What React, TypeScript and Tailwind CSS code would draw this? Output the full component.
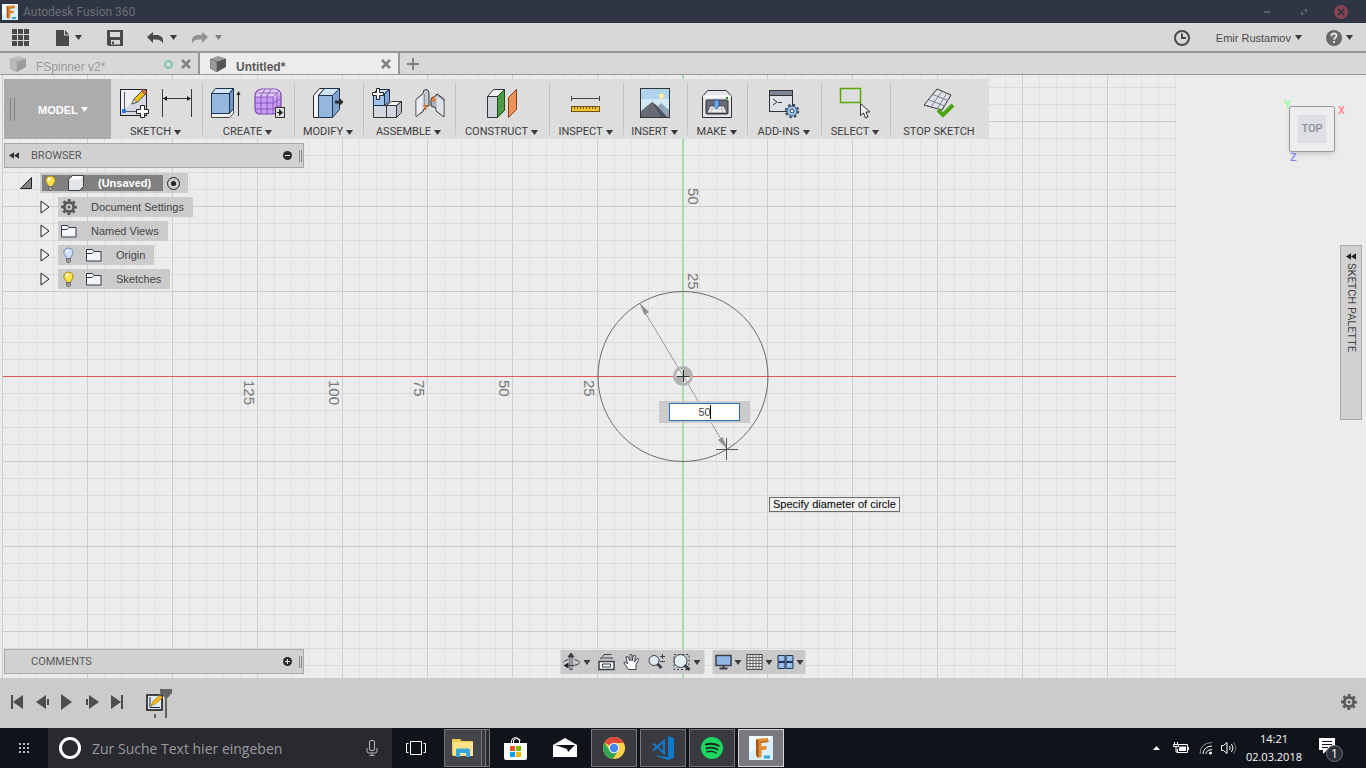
import type { ReactNode } from 'react'

const MAJOR = 85
const MINOR = 17

const Caret = ({ className = 'text-[#3a3a3a]' }: { className?: string }) => (
  <svg className={`w-[7px] h-[5px] shrink-0 ${className}`} viewBox="0 0 7 5" fill="currentColor">
    <path d="M0 0h7L3.500 5z" />
  </svg>
)

/* ---------- Title bar, quick access, tabs ---------- */

const FusionLogo = ({ className }: { className: string }) => (
  <svg className={className} viewBox="0 0 24 24">
    <rect width="24" height="24" fill="#d9f0fa" />
    <path d="M0 0h24L0 18z" fill="#eef9fd" />
    <path d="M7 3l12-1 .5 4-7 .8v3.500l5-.3v3.600l-5 .6V21l-4 1z" fill="#e58a2f" />
    <path d="M7 3l2.500 1.500L9.500 20l-1 2-1.500-3z" fill="#a9551a" />
    <path d="M10 6l9-1.200.5 1.200-7 .9z" fill="#b5651f" />
    <path d="M15 19.500h6v3h-6z" fill="#2fa6dc" />
  </svg>
)

const TitleBar = () => (
  <header className="flex items-center h-[23px] pl-0.5 pr-[18px] bg-[#2f3542]">
    <FusionLogo className="w-4 h-4" />
    <h1 className="ml-[5px] text-[12px] leading-4 text-[#6b7078] font-['Roboto',sans-serif]">Autodesk Fusion 360</h1>
    <div className="ml-auto flex items-center h-full">
      <button aria-label="Minimize" className="w-[6px] h-0.5 bg-[#596070]" />
      <button aria-label="Restore" className="ml-[31px]">
        <svg className="w-[6px] h-[6px]" viewBox="0 0 6 6" fill="#596070">
          <path d="M2 0h4v4zM0 2v4h4z" />
        </svg>
      </button>
      <button aria-label="Close" className="ml-[27px]">
        <svg className="w-[14px] h-[14px]" viewBox="0 0 14 14">
          <circle cx="7" cy="7" r="7" fill="#8b4250" />
          <path d="M4 4l6 6M10 4l-6 6" stroke="#2f3542" strokeWidth="1.800" />
        </svg>
      </button>
    </div>
  </header>
)

const QuickAccess = () => (
  <div className="flex items-center h-[30px] pl-3 pr-[13px] pt-px bg-[#d8d8d8] border-b-2 border-[#979797] text-[#4a4a4a]">
    <button aria-label="Data panel">
      <svg className="w-[17px] h-[17px]" viewBox="0 0 17 17" fill="currentColor">
        <path d="M0 0h5v5H0zM6 0h5v5H6zM12 0h5v5h-5zM0 6h5v5H0zM6 6h5v5H6zM12 6h5v5h-5zM0 12h5v5H0zM6 12h5v5H6zM12 12h5v5h-5z" />
      </svg>
    </button>
    <button aria-label="File" className="ml-[27px] flex items-center gap-1.5">
      <svg className="w-[13px] h-4" viewBox="0 0 13 16" fill="currentColor">
        <path d="M0 0h8v5.500h5V16H0zM9 0l4 4.500H9z" />
      </svg>
      <Caret />
    </button>
    <button aria-label="Save" className="ml-[25px]">
      <svg className="w-4 h-4" viewBox="0 0 16 16" fill="currentColor">
        <path fillRule="evenodd" d="M0 0h16v16H1.500L0 14.500zM3 2v5h10V2zM4 10v4.500h9V10zM5 11.500h2V14H5z" />
      </svg>
    </button>
    <button aria-label="Undo" className="ml-6 flex items-center gap-[7px]">
      <svg className="w-4 h-3" viewBox="0 0 16 12" fill="currentColor">
        <path d="M0 5l6-5v3h3c4 0 7 2 7 5v4c-1-3-3-4.500-7-4.500H6V11z" />
      </svg>
      <Caret />
    </button>
    <button aria-label="Redo" className="ml-[15px] flex items-center gap-[7px] text-[#929292]">
      <svg className="w-4 h-3" viewBox="0 0 16 12" fill="currentColor">
        <path d="M16 5l-6-5v3H7C3 3 0 5 0 8v4c1-3 3-4.500 7-4.500h3V11z" />
      </svg>
      <Caret className="text-[#808080]" />
    </button>

    <button aria-label="Job status" className="ml-auto">
      <svg className="w-4 h-4" viewBox="0 0 16 16" fill="none" stroke="currentColor" strokeWidth="2">
        <circle cx="8" cy="8" r="7" />
        <path d="M8 3.500V8h4" />
      </svg>
    </button>
    <button className="ml-[26px] flex items-center gap-1 text-[11px] leading-4">
      Emir Rustamov
      <Caret />
    </button>
    <button aria-label="Help" className="ml-6 flex items-center gap-1">
      <svg className="w-4 h-4" viewBox="0 0 16 16">
        <circle cx="8" cy="8" r="8" fill="#696969" />
        <path d="M5.500 6.200c0-3.400 5-3.400 5-.5C10.500 7.500 8 7.600 8 9.800M8 11v2" fill="none" stroke="#e4e4e4" strokeWidth="2" />
      </svg>
      <Caret />
    </button>
  </div>
)

const TabCube = ({ light, dark }: { light: string; dark: string }) => (
  <svg className="w-4 h-4 shrink-0" viewBox="0 0 16 16">
    <path d="M0 3l8-3 8 2.500-9 3z" fill={light} />
    <path d="M0 3l7 2.500V16l-7-4z" fill={light} stroke={dark} strokeWidth=".6" />
    <path d="M7 5.500l9-3V11l-9 5z" fill={dark} />
  </svg>
)

const CloseMark = () => (
  <svg className="w-[10px] h-[10px]" viewBox="0 0 10 10" stroke="#818181" strokeWidth="2.500">
    <path d="M1 1l8 8M9 1L1 9" />
  </svg>
)

const Tabs = () => (
  <div className="flex h-[22px] bg-[#d8d8d8] border-b border-[#979797] text-[12px] leading-4">
    <div className="flex items-center w-[200px] pl-[10px] pr-[7px] pt-px border-r-2 border-[#979797]">
      <TabCube light="#bcbcbc" dark="#9c9c9c" />
      <span className="ml-[10px] pt-1.5 text-[#9a9a9a]">FSpinner v2*</span>
      <span className="ml-auto w-[9px] h-[9px] rounded-full border-2 border-[#7fc5b5]" />
      <button aria-label="Close FSpinner v2" className="ml-2">
        <CloseMark />
      </button>
    </div>
    <div className="flex items-center w-[200px] pl-[10px] pr-[7px] pt-px bg-[#ececec] border-r-2 border-[#979797]">
      <TabCube light="#9b9b9b" dark="#565656" />
      <span className="ml-[10px] pt-1.5 font-bold text-[#5a5a5a]">Untitled*</span>
      <button aria-label="Close Untitled" className="ml-auto">
        <CloseMark />
      </button>
    </div>
    <button aria-label="New tab" className="ml-[7px]">
      <svg className="w-3 h-3" viewBox="0 0 12 12" stroke="#808080" strokeWidth="2">
        <path d="M6 0v12M0 6h12" />
      </svg>
    </button>
  </div>
)

/* ---------- Toolbar ---------- */

const Tool = ({ children }: { children: ReactNode }) => (
  <svg className="w-8 h-8" viewBox="0 0 32 32" fill="none">
    {children}
  </svg>
)

const SketchIcon = () => (
  <Tool>
    <rect x="2.500" y="2.500" width="26" height="26" fill="#d5d9e4" stroke="#222" />
    <path d="M3 3h25L3 25z" fill="#eef0f5" />
    <path d="M6.500 5v19.500H22" stroke="#555" />
    <rect x="4" y="22" width="4" height="4" fill="#2e7be0" />
    <path d="M14 17l2-5 9-9 3.500 3-9 9z" fill="#f5c21b" stroke="#222" strokeWidth=".8" />
    <path d="M23.500 4.500l2-2.500 3.500 3-2 2.500z" fill="#c4744f" stroke="#7a3b23" strokeWidth=".6" />
    <path d="M14 17l2-5 2.500 3z" fill="#fff" stroke="#222" strokeWidth=".5" />
    <path d="M22.500 18.500h4v4h4v4h-4v4h-4v-4h-4v-4h4z" fill="#fff" stroke="#222" />
  </Tool>
)

const DimensionIcon = () => (
  <Tool>
    <path d="M1.500 2v28M30.500 2v28M2 11.500h28" stroke="#3a3a3a" />
    <path d="M2 11.500l4-2.500v5zM30 11.500l-4-2.500v5z" fill="#222" />
  </Tool>
)

const ExtrudeIcon = () => (
  <Tool>
    <path d="M1.500 26v4.500h18l4-4v-5" fill="#f1f1f1" stroke="#444" />
    <path d="M1.500 6.500h18v20h-18z" fill="#93b7dd" stroke="#1d3150" />
    <path d="M1.500 6.500l4-5h18l-4 5z" fill="#d4e6f5" stroke="#1d3150" />
    <path d="M19.500 6.500l4-5v20l-4 5z" fill="#6f97c5" stroke="#1d3150" />
    <path d="M28.500 29V6" stroke="#333" />
    <path d="M28.500 4l2 4h-4z" fill="#222" />
  </Tool>
)

const FormIcon = () => (
  <Tool>
    <path d="M2 11Q1 3 9 2h12q7 0 7 7v11q-2 7-9 7H7q-5 0-5-6z" fill="#c79cf2" stroke="#7b4ab0" strokeWidth="1.200" />
    <path d="M3 10Q4 3 9 2.500h12q5 0 6 4l-4 4z" fill="#e3ccfb" />
    <path d="M2 10h18M2 16h18M2 22h18M8 8v19M14 8v19M20 10v17M8 9l4-7M14 9l4-7M20 10l6-6M20 16l8-4M20 22l8-4M5 6h19M24 6v18" stroke="#7b4ab0" strokeWidth=".8" />
    <rect x="22.500" y="20.500" width="9" height="10" fill="#ddd" stroke="#333" />
    <path d="M24 25h2v-3l4 3.500-4 3.500v-3h-2z" fill="#222" />
  </Tool>
)

const PressPullIcon = () => (
  <Tool>
    <path d="M1.500 8.500l6-7h5l-6 7v22h-5z" fill="#f2f3f6" stroke="#222" />
    <path d="M6.500 8.500h14v22h-14z" fill="#93b7dd" stroke="#1d3150" />
    <path d="M6.500 8.500l6-7h15l-7 7z" fill="#d4e6f5" stroke="#1d3150" />
    <path d="M20.500 8.500l7-7v21l-7 8z" fill="#7fa4cf" stroke="#1d3150" />
    <path d="M23 13.500h4v-3l4.500 4.500-4.500 4.500v-3h-4z" fill="#2a2a2a" />
  </Tool>
)

const ComponentIcon = () => (
  <Tool>
    <path d="M2.500 18.500h13v12h-13zM15.500 18.500h10v12h-10z" fill="#d3d7e0" stroke="#333" />
    <path d="M15.500 18.500l5-4h10l-5 4z" fill="#f1f2f5" stroke="#333" />
    <path d="M25.500 18.500l5-4v11l-5 5z" fill="#b8bdc9" stroke="#333" />
    <path d="M2.500 6.500h11v12h-11z" fill="#9fc0e8" stroke="#1d3150" />
    <path d="M2.500 6.500l4-4h12l-5 4z" fill="#cfe0f4" stroke="#1d3150" />
    <path d="M13.500 6.500l5-4v12l-5 4z" fill="#7fa4d6" stroke="#1d3150" />
    <path d="M5.500 1.500h3v4h4v3h-4v4h-3v-4h-4v-3h4z" fill="#fff" stroke="#222" />
  </Tool>
)

const JointIcon = () => (
  <Tool>
    <path d="M2 12.500l7-6q0-4 3-4t3 4v12l-4 2-2 4-7 5z" fill="#c3c9d2" stroke="#333" />
    <path d="M2.500 13l6-5v15l-6 6z" fill="#eceef2" />
    <path d="M10.500 7v12" stroke="#8e95a1" />
    <path d="M17 13q0-3 3-3l3-3 7 5v18l-8-6v-3l-5-2z" fill="#aab1bd" stroke="#333" />
    <path d="M22.500 9l7 5v15l-7-5.500z" fill="#dfe2e8" />
    <path d="M11.500 23v-5M19.500 15V9" stroke="#f07018" strokeWidth="1.600" />
    <path d="M9 18.500h5M17 13h5" stroke="#f07018" />
  </Tool>
)

const ConstructIcon = () => (
  <Tool>
    <path d="M1.500 9.500h10v21h-10z" fill="#cfd3dd" stroke="#333" />
    <path d="M1.500 9.500l6-7h11l-7 7z" fill="#f2f3f6" stroke="#333" />
    <path d="M11.500 9.500l7-7v21l-7 7z" fill="#4f9a45" stroke="#1f4a1b" />
    <path d="M22.500 10.500l8-8v20l-8 8z" fill="#ec935c" stroke="#8a3c10" />
  </Tool>
)

const InspectIcon = () => (
  <Tool>
    <path d="M1.500 9v5M29.500 9v5M2 11.500h27" stroke="#444" />
    <rect x="1.500" y="19.500" width="28" height="5" fill="#f3c52e" stroke="#6e5310" />
    <path d="M4.500 20v2M7.500 20v2M10.500 20v2M13.500 20v2M16.500 20v2M19.500 20v2M22.500 20v2M25.500 20v2" stroke="#6e5310" />
  </Tool>
)

const InsertIcon = () => (
  <Tool>
    <rect x="1.500" y="1.500" width="29" height="29" fill="#aed4ee" stroke="#333" />
    <path d="M2 12h28v12H2z" fill="#d2e9f5" />
    <circle cx="22.500" cy="9" r="2.500" fill="#fff6c8" stroke="#f4dc8c" />
    <path d="M13 25l9-9 8 7v7H13z" fill="#93a4b7" />
    <path d="M2 24l6-5 5-4 4 3 11 12H2z" fill="#666b76" />
    <path d="M13 15l4 3 11 12h-6z" fill="#4f545f" />
  </Tool>
)

const MakeIcon = () => (
  <Tool>
    <path d="M1.500 9.500l5-6h19l5 6v21h-29z" fill="#e3e5ea" stroke="#333" strokeLinejoin="round" />
    <path d="M2 9.500h28" stroke="#fff" strokeWidth="2" />
    <rect x="5" y="13" width="22" height="14" rx="1" fill="#6a6d75" stroke="#333" />
    <path d="M9 19h14l3 7H6z" fill="#e7e9ee" stroke="#222" strokeWidth=".6" />
    <path d="M8 22h17M12 19l-2 7M20 19l2 7" stroke="#aaa" strokeWidth=".6" />
    <path d="M13 13h5v6l-2.500 3L13 19z" fill="#6ea6e8" stroke="#1f4f96" strokeWidth=".8" />
    <rect x="25" y="10" width="2" height="2" fill="#129a12" />
  </Tool>
)

const AddInsIcon = () => (
  <Tool>
    <rect x="1.500" y="3.500" width="23" height="21" fill="#dfe2e9" stroke="#333" />
    <path d="M2 4h22v4H2z" fill="#7c8594" />
    <path d="M2 8.500h22" stroke="#333" />
    <path d="M5 12l4 3-4 3M10 15.500h4" stroke="#333" />
    <circle cx="24" cy="24" r="6.300" stroke="#2b4668" strokeWidth="1.800" strokeDasharray="2.500 2.450" />
    <circle cx="24" cy="24" r="5" fill="#a9c9ea" stroke="#2b4668" />
    <circle cx="24" cy="24" r="2" fill="#e8edf3" stroke="#2b4668" />
  </Tool>
)

const SelectIcon = () => (
  <Tool>
    <rect x="1.500" y="1.500" width="20" height="14" stroke="#5aa700" strokeWidth="1.500" />
    <path d="M21.500 16.500v12l3-2.500 2 5 2.500-1-2-5h4z" fill="#e9ebef" stroke="#333" />
  </Tool>
)

const StopSketchIcon = () => (
  <Tool>
    <path d="M14 2l14 6-9 15L1 18z" fill="#dfe2ea" stroke="#333" />
    <path d="M19 4l-11 16M24 6l-10 16M10 7.500l15 6M6 13l16 6" stroke="#7d818a" />
    <path d="M15 23l5 5 10-10" stroke="#4aa50e" strokeWidth="4" />
  </Tool>
)

interface ToolGroupProps {
  label: string
  width: string
  menu?: boolean
  last?: boolean
  icons: ReactNode
}

const ToolGroup = ({ label, width, menu = true, last = false, icons }: ToolGroupProps) => (
  <div className={`flex items-center ${width}`}>
    <button className="flex-1 flex flex-col items-center h-full pt-2 pr-0.5 whitespace-nowrap">
      <span className="flex gap-[11px]">{icons}</span>
      <span className="mt-[5px] flex items-center gap-[3px] text-[11px] leading-4 font-['Roboto',sans-serif] text-[#3c3c3c]">
        {label}
        {menu && <Caret />}
      </span>
    </button>
    {!last && <span className="w-px h-[52px] bg-[#c3c3c3]" />}
  </div>
)

const Toolbar = () => (
  <nav className="flex w-max h-[60px] bg-[#dddddd]">
    <button className="flex items-center w-[107px] pl-1.5 bg-[#acacac] text-[11px] leading-4 font-bold text-white">
      <span className="w-[5px] h-[23px] border-x border-[#858585]" />
      <span className="ml-[23px] mr-[3px] pt-0.5">MODEL</span>
      <Caret className="text-white" />
    </button>
    <ToolGroup label="SKETCH" width="w-[92px]" icons={<><SketchIcon /><DimensionIcon /></>} />
    <ToolGroup label="CREATE" width="w-[92px]" icons={<><ExtrudeIcon /><FormIcon /></>} />
    <ToolGroup label="MODIFY" width="w-[69px]" icons={<PressPullIcon />} />
    <ToolGroup label="ASSEMBLE" width="w-[92px]" icons={<><ComponentIcon /><JointIcon /></>} />
    <ToolGroup label="CONSTRUCT" width="w-[94px]" icons={<ConstructIcon />} />
    <ToolGroup label="INSPECT" width="w-[74px]" icons={<InspectIcon />} />
    <ToolGroup label="INSERT" width="w-[64px]" icons={<InsertIcon />} />
    <ToolGroup label="MAKE" width="w-[60px]" icons={<MakeIcon />} />
    <ToolGroup label="ADD-INS" width="w-[74px]" icons={<AddInsIcon />} />
    <ToolGroup label="SELECT" width="w-[69px]" icons={<SelectIcon />} />
    <ToolGroup label="STOP SKETCH" width="w-[98px]" menu={false} last icons={<StopSketchIcon />} />
  </nav>
)

/* ---------- Browser tree ---------- */

const Bulb = ({ on = true }: { on?: boolean }) => (
  <svg className="w-[11px] h-4 shrink-0" viewBox="0 0 11 16">
    <path d="M5.500 1a4.500 4.500 0 0 0-3 8q1 1 1 2.500h4q0-1.500 1-2.500a4.500 4.500 0 0 0-3-8z" fill={on ? '#ffe14a' : '#cfe0ff'} stroke={on ? '#a5861a' : '#7088b5'} />
    <circle cx="4" cy="4" r="1.500" fill="#fff" />
    <path d="M3.500 11.500h4v3l-1 1h-2l-1-1z" fill="#9a9a9a" stroke="#555" strokeWidth=".7" />
  </svg>
)

const Folder = () => (
  <svg className="w-4 h-[14px] shrink-0" viewBox="0 0 16 14">
    <path d="M.5 13v-11.500h6l1.500 2h7V13z" fill="#f5f6f8" stroke="#333b48" strokeLinejoin="round" />
    <path d="M1 5.500h5l2-2" fill="none" stroke="#333b48" />
  </svg>
)

const Gear = () => (
  <svg className="w-4 h-4 shrink-0" viewBox="0 0 16 16" fill="none" stroke="#575757">
    <circle cx="8" cy="8" r="4.700" strokeWidth="2.800" />
    <circle cx="8" cy="8" r="6.800" strokeWidth="2.200" strokeDasharray="2.900 2.440" strokeDashoffset="1.450" />
    <circle cx="8" cy="8" r="1.500" fill="#575757" stroke="none" />
  </svg>
)

const PanelHeader = ({ title, open }: { title: string; open: boolean }) => (
  <div className="flex items-center w-[300px] h-[25px] pl-1 pr-px bg-[#d1d1d1] border border-[#a8a8a8] text-[11px] leading-4 font-['Roboto',sans-serif] text-[#5a5a5a]">
    <span className="w-[22px]">
      {open && (
        <svg className="w-[10px] h-[7px]" viewBox="0 0 11 7" fill="#333">
          <path d="M5.500 0v7L0 3.500zM11 0v7L5.500 3.500z" />
        </svg>
      )}
    </span>
    <h2>{title}</h2>
    <button aria-label={open ? 'Collapse' : 'Expand'} className="ml-auto">
      <svg className="w-[9px] h-[9px]" viewBox="0 0 9 9">
        <circle cx="4.500" cy="4.500" r="4.500" fill="#2b2b2b" />
        <path d={open ? 'M2 4.500h5' : 'M2 4.500h5M4.500 2v5'} stroke="#e8e8e8" />
      </svg>
    </button>
    <span className="ml-[7px] w-[3px] h-3 border-x border-[#8a8a8a]" />
  </div>
)

const TreeRow = ({ label, icons }: { label: string; icons: ReactNode }) => (
  <li className="flex items-center h-5 ml-9">
    <svg className="w-[10px] h-[14px] mr-2" viewBox="0 0 10 14" fill="#f2f2f2" stroke="#222">
      <path d="M1 1v12l8-6z" />
    </svg>
    <span className="flex items-center h-5 pl-[3px] pr-[9px] bg-[#cbcbcb]">
      {icons}
      <span className="ml-[14px]">{label}</span>
    </span>
  </li>
)

const Browser = () => (
  <section className="mt-1">
    <PanelHeader title="BROWSER" open />
    <ul className="mt-[5px] flex flex-col gap-1 text-[11px] leading-4 text-[#444]">
      <li className="flex items-center h-5 ml-4">
        <svg className="w-3 h-3 mr-2" viewBox="0 0 12 12">
          <path d="M11.500 .5v11H.5z" fill="#858585" stroke="#222" />
        </svg>
        <span className="flex items-center h-5 w-[148px] pl-0.5 bg-[#cbcbcb]">
          <span className="flex items-center h-4 w-[121px] pl-[3px] bg-[#808080] font-bold text-white">
            <Bulb />
            <svg className="w-4 h-4 ml-3 mr-[14px]" viewBox="0 0 16 16" fill="#fff" stroke="#3c3c3c" strokeLinejoin="round">
              <path d="M.5 4.500l4-4h11v11l-4 4H.5z" fill="#e2e5ea" />
              <path d="M1 4.500l4-3.500h10l-4 3.500z" stroke="none" />
            </svg>
            (Unsaved)
          </span>
          <input type="radio" aria-label="Activate component" defaultChecked className="appearance-none ml-1 w-[13px] h-[13px] rounded-full border border-[#222] bg-[#222] bg-clip-content p-[3px]" />
        </span>
      </li>
      <TreeRow label="Document Settings" icons={<Gear />} />
      <TreeRow label="Named Views" icons={<Folder />} />
      <TreeRow label="Origin" icons={<span className="flex items-center gap-3 ml-0.5"><Bulb on={false} /><Folder /></span>} />
      <TreeRow label="Sketches" icons={<span className="flex items-center gap-3 ml-0.5"><Bulb /><Folder /></span>} />
    </ul>
  </section>
)

/* ---------- Canvas ---------- */

const columns = Array.from({ length: 70 }, (_, i) => (i - 40) * MINOR)
const rows = Array.from({ length: 35 }, (_, i) => (i - 17) * MINOR)

const GridCanvas = () => (
  <svg className="absolute inset-0 w-full h-full" viewBox="-683 -301 1366 603" preserveAspectRatio="xMidYMid slice">
    {columns.map((x) => (
      <rect key={x} x={x - 1} y="-301" width="1" height="603" fill={x % MAJOR ? '#e0e0e0' : '#cecece'} />
    ))}
    {rows.map((y) => (
      <rect key={y} x="-680" y={y} width="1173" height="1" fill={y % MAJOR ? '#dbdbdb' : '#cbcbcb'} />
    ))}
    <rect x="-1" y="-301" width="2" height="603" fill="#a6dfa6" />
    <rect x="-680" y="0" width="1173" height="1" fill="#e05858" />

    <g fontSize="15" fill="#777" fontFamily="Liberation Sans, sans-serif">
      {[25, 50, 75, 100, 125].map((n) => (
        <text key={n} transform={`translate(${(-n / 25) * MAJOR - 14} 4) rotate(90)`}>{n}</text>
      ))}
      {[25, 50].map((n) => (
        <text key={n} transform={`translate(5 ${(-n / 25) * MAJOR - 18}) rotate(90)`}>{n}</text>
      ))}
    </g>

    <circle cx="0" cy=".5" r="85" fill="none" stroke="#6b6b6b" />
    <path d="M-43 -72L44 73" stroke="#9a9a9a" />
    <path d="M-43.500 -73l9.500 9-4.500 3zM44.500 73l-9.500-9 4.500-3z" fill="#8f8f8f" />
    <circle cx="0" cy="0" r="8.500" fill="none" stroke="#b3b3b3" strokeWidth="3" />
    <path d="M0 0V-9a9 9 0 0 1 9 9zM0 0v9a9 9 0 0 1-9-9z" fill="#b3b3b3" />
    <path d="M-6 .5H6M.5-6V6" stroke="#333" />
    <path d="M33 73.500h22M43.500 62v22" stroke="#555" />
  </svg>
)

const ViewCube = () => (
  <div className="absolute top-[31px] right-[31px] flex items-center justify-center w-[46px] h-[46px] rounded-xs border border-[#9a9a9a] bg-[#ededed] shadow-md font-['Roboto',sans-serif] text-[11px] leading-3 font-medium">
    <span className="flex items-center justify-center w-7 h-7 bg-[#dddfe4] text-[#8b8e96]">TOP</span>
    <span className="absolute -top-2 -left-1.5 text-[#8cff8c]">Y</span>
    <span className="absolute -top-0.5 -right-[11px] text-[#ff8585]">X</span>
    <span className="absolute -bottom-[13px] left-0 text-[#8080ff]">Z</span>
  </div>
)

const SketchPalette = () => (
  <aside className="absolute top-[170px] right-1 flex flex-col items-center w-[22px] h-[175px] pt-[7px] bg-[#d1d1d1] border border-[#a8a8a8] text-[#444]">
    <svg className="w-[10px] h-[7px]" viewBox="0 0 11 7" fill="#222">
      <path d="M5.500 0v7L0 3.500zM11 0v7L5.500 3.500z" />
    </svg>
    <h2 className="mt-[3px] text-[11px] leading-4 font-['Roboto',sans-serif] [writing-mode:vertical-rl]">SKETCH PALETTE</h2>
  </aside>
)

const NavIcon = ({ children }: { children: ReactNode }) => (
  <svg className="w-[18px] h-[18px]" viewBox="0 0 18 18" fill="none" stroke="#3a3f48">
    {children}
  </svg>
)

const NavBar = () => (
  <div className="absolute bottom-1 left-1/2 -translate-x-1/2 flex gap-2">
    <div className="flex items-center gap-[7px] h-6 pl-0.5 pr-1 bg-[#c9c9c9]">
      <button aria-label="Orbit" className="flex items-center gap-[3px]">
        <NavIcon>
          <path d="M9.500 2v14.500h-2V2" fill="#fff" />
          <path d="M8.500 0l3 4h-6z" fill="#3a3f48" />
          <path d="M12 6.500q5 1 5 3-1 3-8 3H6M6 6.500Q1 7.500 1 9.500" />
          <path d="M1 12.500l5-3v6z" fill="#222" stroke="none" />
        </NavIcon>
        <Caret />
      </button>
      <button aria-label="Look at">
        <NavIcon>
          <path d="M1.500 8.500h15v8h-15z" fill="#f3f4f6" strokeWidth="1.500" />
          <path d="M5 11h8v3H5zM3 6V5h12v1M5 4l1.500-2.500H14" />
        </NavIcon>
      </button>
      <button aria-label="Pan">
        <NavIcon>
          <path d="M6 16.500L1.500 10q0-1.500 1.500-1l2 2L3.500 4q1-1.500 2 0L7.500 8V2q1-1.500 2 0V8l1.500-5.500q1.500-1 2 .5L12 9l2.500-3.500q1.500-.5 1.500 1L13.500 12v4.500z" fill="#fff" />
        </NavIcon>
      </button>
      <button aria-label="Zoom">
        <NavIcon>
          <circle cx="6.500" cy="7.500" r="5" fill="#dcebf2" />
          <path d="M10 11l4 4" strokeWidth="3" />
          <path d="M15 1v5M12.500 3.500h5M12.500 8.500h5" />
        </NavIcon>
      </button>
      <button aria-label="Fit" className="flex items-center gap-[3px]">
        <NavIcon>
          <rect x="1.500" y="1.500" width="15" height="15" strokeDasharray="2 2" />
          <circle cx="8" cy="8" r="6.500" fill="#e2eff3" />
          <path d="M12 12l5 5" strokeWidth="3" />
        </NavIcon>
        <Caret />
      </button>
    </div>
    <div className="flex items-center gap-1 h-6 px-0.5 bg-[#c9c9c9]">
      <button aria-label="Display settings" className="flex items-center gap-0.5">
        <NavIcon>
          <rect x="1.500" y="2.500" width="15" height="10" fill="#8fb8e6" strokeWidth="1.500" />
          <path d="M5 15.500h8M9 13v2" strokeWidth="2" />
        </NavIcon>
        <Caret />
      </button>
      <button aria-label="Grid and snaps" className="flex items-center gap-0.5">
        <NavIcon>
          <rect x="1.500" y="1.500" width="15" height="15" fill="#f1f1f1" />
          <path d="M4.500 1v16M7.500 1v16M10.500 1v16M13.500 1v16M1 4.500h16M1 7.500h16M1 10.500h16M1 13.500h16" stroke="#666" />
        </NavIcon>
        <Caret />
      </button>
      <button aria-label="Viewports" className="flex items-center gap-0.5">
        <NavIcon>
          <path d="M1.500 2.500h7v6h-7zM9.500 2.500h7v6h-7zM1.500 9.500h7v6h-7zM9.500 9.500h7v6h-7z" fill="#8fb8e6" stroke="#22395c" />
          <path d="M4 5h2M12 5h2M4 12h2M12 12h2" stroke="#d7e6f7" />
        </NavIcon>
        <Caret />
      </button>
    </div>
  </div>
)

const Workspace = () => (
  <main className="relative flex-1 min-h-0 overflow-hidden bg-[#ececec]">
    <GridCanvas />
    <div className="absolute top-1 left-1">
      <Toolbar />
      <Browser />
    </div>
    <ViewCube />
    <SketchPalette />
    <div className="absolute left-[calc(50%-24px)] top-[calc(50%+24px)] px-[10px] py-0.5 bg-[#cbcbcb] flex">
      <input aria-label="Diameter" defaultValue="50" className="w-[71px] h-[18px] bg-white border border-[#2a6db0] text-center text-[11px] leading-4 text-[#444] outline-none" />
      <span className="absolute left-[51px] top-1 w-px h-[14px] bg-black" />
    </div>
    <p role="tooltip" className="absolute left-[calc(50%+86px)] top-[calc(50%+120px)] px-[3px] border border-[#6a6a6a] bg-[#f0f0ef] text-[11px] leading-[13px] text-black whitespace-nowrap">
      Specify diameter of circle
    </p>
    <div className="absolute bottom-1 left-1">
      <PanelHeader title="COMMENTS" open={false} />
    </div>
    <NavBar />
  </main>
)

/* ---------- Timeline ---------- */

const playback = [
  { label: 'Go to start', d: 'M0 1h2v14H0zM12 1v14L2 8z' },
  { label: 'Step back', d: 'M10 1v14L0 8zM11 5h2v6h-2z' },
  { label: 'Play', d: 'M0 0v16l11-8z' },
  { label: 'Step forward', d: 'M3 1v14l10-7zM0 5h2v6H0z' },
  { label: 'Go to end', d: 'M10 1h2v14h-2zM0 1v14l10-7z' },
]

const Timeline = () => (
  <footer className="flex items-center h-[50px] pl-[11px] pr-[9px] pb-0.5 bg-[#cbcbcb]">
    <div className="flex gap-3 text-[#4d4d4d]">
      {playback.map(({ label, d }) => (
        <button key={label} aria-label={label}>
          <svg className="w-[13px] h-4" viewBox="0 0 13 16" fill="currentColor">
            <path d={d} />
          </svg>
        </button>
      ))}
    </div>
    <svg className="ml-[22px] w-7 h-8" viewBox="0 0 28 32" fill="none">
      <rect x="1" y="9" width="15" height="15" fill="#dcebfa" stroke="#111" strokeWidth="1.500" />
      <path d="M4 11v10.500h10" stroke="#222" />
      <path d="M5 20l2-5 7-6 2.500 2.500-7 6.500z" fill="#f5b41b" stroke="#946510" strokeWidth=".5" />
      <path d="M14 3h12v4l-4.500 5h-2L14 7z" fill="#646464" />
      <path d="M20 8v24M9 28v4" stroke="#646464" strokeWidth="2" />
    </svg>
    <button aria-label="Timeline settings" className="ml-auto">
      <Gear />
    </button>
  </footer>
)

/* ---------- Taskbar ---------- */

const TaskButton = ({ label, active = false, children }: { label: string; active?: boolean; children: ReactNode }) => (
  <button
    aria-label={label}
    className={`flex items-center justify-center w-[46px] h-[38px] border ${active ? 'bg-[#77797d] border-[#d5d5d5]' : 'bg-[#3a3b40] border-[#77787c]'}`}
  >
    {children}
  </button>
)

const Taskbar = () => (
  <div className="flex items-center h-10 bg-[#10131a] font-['Open_Sans',sans-serif] text-white">
    <button aria-label="Start" className="flex justify-center w-12">
      <svg className="w-[10px] h-[10px]" viewBox="0 0 10 10" fill="#b9bcc4">
        <path d="M0 0h2v2H0zM4 0h2v2H4zM8 0h2v2H8zM0 4h2v2H0zM4 4h2v2H4zM8 4h2v2H8zM0 8h2v2H0zM4 8h2v2H4zM8 8h2v2H8z" />
      </svg>
    </button>
    <label className="flex items-center w-[344px] h-full pl-[11px] pr-[14px] bg-[#292a2f]">
      <span className="w-[22px] h-[22px] shrink-0 rounded-full border-[3px] border-white" />
      <input aria-label="Suche" placeholder="Zur Suche Text hier eingeben" className="flex-1 min-w-0 ml-[11px] pt-0.5 bg-transparent text-[14px] leading-5 outline-none placeholder:text-[#9a9b9f]" />
      <svg className="w-3 h-4" viewBox="0 0 12 16" fill="none" stroke="#b5b5b8">
        <rect x="3.500" y=".5" width="5" height="10" rx="1.500" />
        <path d="M1 8v3q0 2 2 2h6q2 0 2-2V8M6 13v2.500M3.500 15.500h5" />
      </svg>
    </label>
    <button aria-label="Task view" className="ml-[14px]">
      <svg className="w-5 h-[14px]" viewBox="0 0 20 14" fill="none" stroke="#fff">
        <path d="M4.500 .5h11v13h-11zM2.500 2.500h-2v9h2M17.500 2.500h2v9h-2" />
      </svg>
    </button>
    <div className="ml-[18px] flex">
      <button aria-label="Explorer" className="flex items-center justify-center w-[38px] h-[38px] bg-[#45464b] border border-[#77787c]">
        <svg className="w-[22px] h-[18px]" viewBox="0 0 22 18">
          <path d="M0 0h8l2 2h11v14H0z" fill="#f2c94c" />
          <path d="M1 3h20v14H1z" fill="#ffe28a" />
          <path d="M4 18v-7q0-1.500 1.500-1.500h11Q18 9.500 18 11v7h-4v-4H8v4z" fill="#35a7e0" />
        </svg>
      </button>
      <span className="w-1 h-[38px] border border-l-0 border-[#77787c] bg-[#3a3b40]" />
      <span className="w-1 h-[38px] border border-l-0 border-[#77787c] bg-[#2c2d32]" />
    </div>
    <button aria-label="Store" className="ml-[14px]">
      <svg className="w-[23px] h-[23px]" viewBox="0 0 23 23">
        <path d="M0 6h23v15q0 2-2 2H2q-2 0-2-2z" fill="#fff" />
        <path d="M7.500 7V4q0-3 4-3.500 4 .5 4 3.500v3M9.500 6V3q3-3 7 0" fill="none" stroke="#fff" />
        <path d="M6 9h5v5H6z" fill="#f25022" />
        <path d="M12 9h5v5h-5z" fill="#7fba00" />
        <path d="M6 15h5v5H6z" fill="#00a4ef" />
        <path d="M12 15h5v5h-5z" fill="#ffb900" />
      </svg>
    </button>
    <button aria-label="Mail" className="ml-[26px] mr-[14px]">
      <svg className="w-6 h-5" viewBox="0 0 24 20">
        <path d="M0 7l12-7 12 7v12H0z" fill="#fff" />
        <path d="M2 7h20l-7 7-1-3z" fill="#10131a" />
      </svg>
    </button>
    <div className="flex gap-[3px]">
      <TaskButton label="Chrome">
        <svg className="w-[22px] h-[22px]" viewBox="0 0 22 22">
          <circle cx="11" cy="11" r="11" fill="#fbd24a" />
          <path d="M11 11L1.500 5.500A11 11 0 0 1 20.500 5.500L20.500 6H11z" fill="#e2473a" />
          <path d="M1.500 5.500A11 11 0 0 0 10 22l5.300-8.500L6.700 13.500z" fill="#34a455" />
          <circle cx="11" cy="11" r="5.200" fill="#f5f5f5" />
          <circle cx="11" cy="11" r="4.200" fill="#4387f0" />
        </svg>
      </TaskButton>
      <TaskButton label="Code">
        <svg className="w-6 h-6" viewBox="0 0 24 24">
          <path d="M17 0l6 2v20l-6 2-15-5 15 2z" fill="#1079cb" />
          <path d="M2 7.500l11 9.500V5L2 14.500" fill="none" stroke="#1079cb" strokeWidth="2" />
        </svg>
      </TaskButton>
      <TaskButton label="Spotify">
        <svg className="w-[22px] h-[22px]" viewBox="0 0 22 22" fill="none" stroke="#1a2a1e" strokeLinecap="round">
          <circle cx="11" cy="11" r="11" fill="#1ed760" stroke="none" />
          <path d="M5 7.500q7-2 12.500 1.200" strokeWidth="2.200" />
          <path d="M5.500 11.300q6-1.700 11 1.200" strokeWidth="1.800" />
          <path d="M6 14.800q5-1.300 9 1" strokeWidth="1.500" />
        </svg>
      </TaskButton>
      <TaskButton label="Fusion 360" active>
        <FusionLogo className="w-6 h-6" />
      </TaskButton>
    </div>

    <div className="ml-auto flex items-center pr-[23px]">
      <svg className="w-[7px] h-1" viewBox="0 0 7 4" fill="#fff">
        <path d="M0 4l3.500-4L7 4z" />
      </svg>
      <svg className="ml-[13px] w-4 h-3" viewBox="0 0 16 12" fill="none" stroke="#fff">
        <path d="M6 2.500h8.500v8h-10V7M15.500 5v3" />
        <path d="M7 4.500h6v4.500H6V6z" fill="#fff" stroke="none" />
        <path d="M1.500 0v2M4.500 0v2M.5 2.500h5v2h-5zM3 5v5h2" />
      </svg>
      <svg className="ml-2.5 w-[14px] h-[14px]" viewBox="0 0 14 14" fill="none" stroke="#fff">
        <path d="M1 13Q1 2 13 1.500" stroke="#8d9097" />
        <path d="M4 13Q4.500 5.500 13 5M7 13q0-4 6-4.500" />
        <circle cx="11.500" cy="12" r="1.500" fill="#fff" stroke="none" />
      </svg>
      <svg className="ml-2 w-4 h-[14px]" viewBox="0 0 16 14" fill="none" stroke="#fff">
        <path d="M.5 4.500h2L6 1.500v11L2.500 9.500h-2zM8.500 5q1.500 2 0 4M10.500 3q3 4 0 8" />
        <path d="M12.500 1.500q4.500 5.500 0 11" stroke="#6d7077" />
      </svg>
      <time className="ml-[9px] flex flex-col items-center text-[11px] leading-[18px] tabular-nums">
        <span>14:21</span>
        <span>02.03.2018</span>
      </time>
      <button aria-label="Notifications" className="ml-[17px] pt-1">
        <svg className="w-6 h-6" viewBox="0 0 24 24">
          <path d="M0 0h16v12H8l-4 4v-4H0z" fill="#fff" />
          <path d="M3 3.500h10M3 6.500h10M3 9.500h6" stroke="#10131a" />
          <circle cx="15.500" cy="15.500" r="8" fill="#2b2e36" stroke="#73767d" />
          <text x="15.500" y="20" fontSize="12" textAnchor="middle" fill="#fff">1</text>
        </svg>
      </button>
    </div>
  </div>
)

const App = () => {
  return (
    <div className="flex flex-col h-screen overflow-hidden font-['Liberation_Sans',sans-serif]">
      <TitleBar />
      <QuickAccess />
      <Tabs />
      <Workspace />
      <Timeline />
      <Taskbar />
    </div>
  )
}

export default App
